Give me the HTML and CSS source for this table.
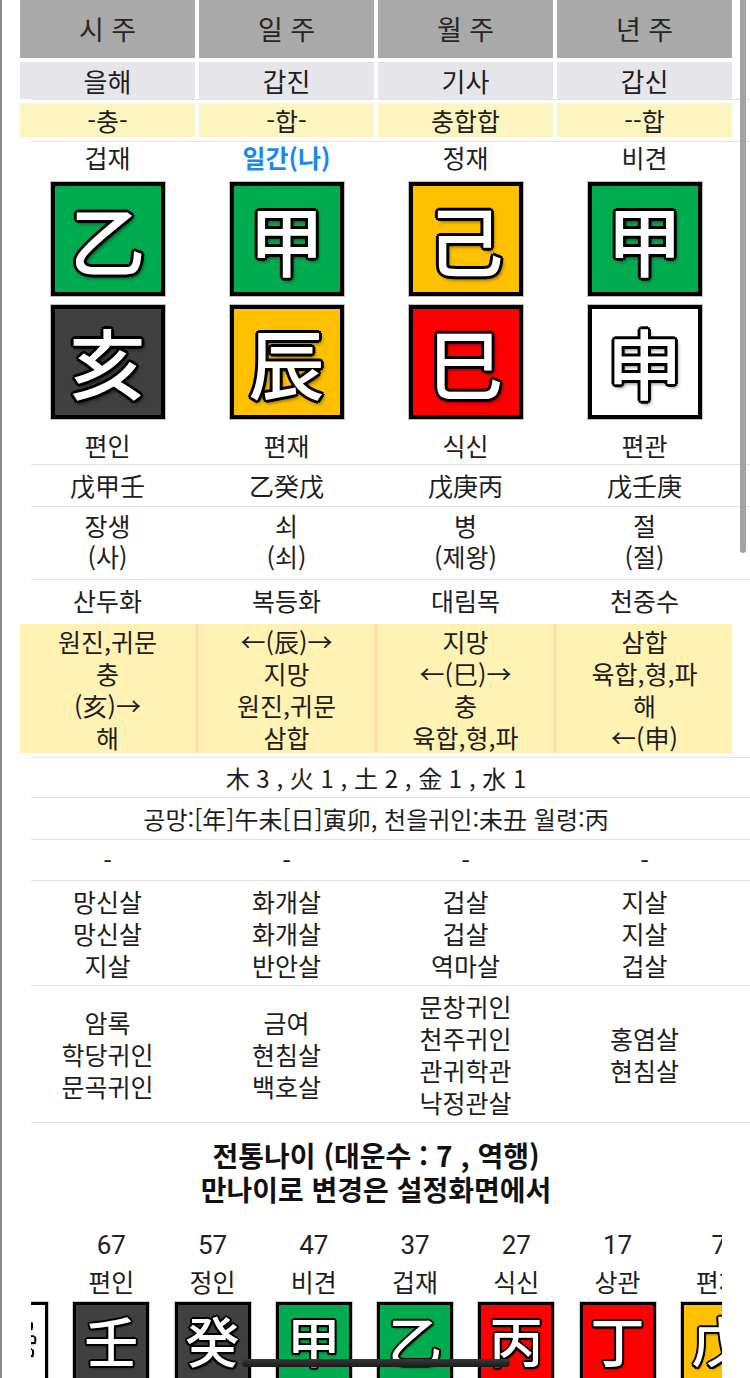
FILE: index.html
```html
<!DOCTYPE html>
<html lang="ko">
<head>
<meta charset="utf-8">
<title>사주</title>
<link rel="stylesheet" href="styles.css">
</head>
<body>
<div class="page">
  <div class="cols head">
    <div>시 주</div><div>일 주</div><div>월 주</div><div>년 주</div>
  </div>
  <div class="cols names">
    <div>을해</div><div>갑진</div><div>기사</div><div>갑신</div>
  </div>
  <div class="sep"></div>
  <div class="cols rel">
    <div>-충-</div><div>-합-</div><div>충합합</div><div>--합</div>
  </div>
  <div class="sep sep-rel"></div>

  <div class="cols pillars">
    <div class="pillar">
      <div class="lbl">겁재</div>
      <div class="gz wood">乙</div>
      <div class="gz water">亥</div>
      <div class="lbl">편인</div>
    </div>
    <div class="pillar">
      <div class="lbl me">일간(나)</div>
      <div class="gz wood">甲</div>
      <div class="gz earth">辰</div>
      <div class="lbl">편재</div>
    </div>
    <div class="pillar">
      <div class="lbl">정재</div>
      <div class="gz earth">己</div>
      <div class="gz fire">巳</div>
      <div class="lbl">식신</div>
    </div>
    <div class="pillar">
      <div class="lbl">비견</div>
      <div class="gz wood">甲</div>
      <div class="gz metal">申</div>
      <div class="lbl">편관</div>
    </div>
  </div>
  <div class="sep"></div>

  <div class="cols jj">
    <div>戊甲壬</div><div>乙癸戊</div><div>戊庚丙</div><div>戊壬庚</div>
  </div>
  <div class="sep"></div>

  <div class="cols ws">
    <div>장생<br>(사)</div><div>쇠<br>(쇠)</div><div>병<br>(제왕)</div><div>절<br>(절)</div>
  </div>
  <div class="sep"></div>

  <div class="cols ny">
    <div>산두화</div><div>복등화</div><div>대림목</div><div>천중수</div>
  </div>

  <div class="cols yb">
    <div>원진,귀문<br>충<br>(亥)→<br>해</div>
    <div>←(辰)→<br>지망<br>원진,귀문<br>삼합</div>
    <div>지망<br>←(巳)→<br>충<br>육합,형,파</div>
    <div>삼합<br>육합,형,파<br>해<br>←(申)</div>
  </div>
  <div class="sep"></div>

  <div class="full oh">木 3 , 火 1 , 土 2 , 金 1 , 水 1</div>
  <div class="sep"></div>
  <div class="full gm">공망:[年]午未[日]寅卯, 천을귀인:未丑 월령:丙</div>
  <div class="sep"></div>
  <div class="cols dash">
    <div>-</div><div>-</div><div>-</div><div>-</div>
  </div>
  <div class="sep"></div>
  <div class="cols sal">
    <div>망신살<br>망신살<br>지살</div>
    <div>화개살<br>화개살<br>반안살</div>
    <div>겁살<br>겁살<br>역마살</div>
    <div>지살<br>지살<br>겁살</div>
  </div>
  <div class="sep"></div>
  <div class="cols gi">
    <div>암록<br>학당귀인<br>문곡귀인</div>
    <div>금여<br>현침살<br>백호살</div>
    <div>문창귀인<br>천주귀인<br>관귀학관<br>낙정관살</div>
    <div>홍염살<br>현침살</div>
  </div>
  <div class="sep"></div>

  <div class="title">전통나이 (대운수 : 7 , 역행)<br>만나이로 변경은 설정화면에서</div>

  <div class="dw">
    <div class="dw-track">
      <div class="dw-item"><div class="age">77</div><div class="ss">편재</div><div class="dgz metal">辛</div></div>
      <div class="dw-item"><div class="age">67</div><div class="ss">편인</div><div class="dgz water">壬</div></div>
      <div class="dw-item"><div class="age">57</div><div class="ss">정인</div><div class="dgz water">癸</div></div>
      <div class="dw-item"><div class="age">47</div><div class="ss">비견</div><div class="dgz wood">甲</div></div>
      <div class="dw-item"><div class="age">37</div><div class="ss">겁재</div><div class="dgz wood">乙</div></div>
      <div class="dw-item"><div class="age">27</div><div class="ss">식신</div><div class="dgz fire">丙</div></div>
      <div class="dw-item"><div class="age">17</div><div class="ss">상관</div><div class="dgz fire">丁</div></div>
      <div class="dw-item"><div class="age">7</div><div class="ss">편재</div><div class="dgz earth">戊</div></div>
    </div>
  </div>

  <div class="scrollbar"></div>
  <div class="home"></div>
</div>
</body>
</html>
```

FILE: styles.css
```css
html, body {
  margin: 0;
  padding: 0;
  background: #fff;
}
body {
  width: 750px;
  height: 1378px;
  overflow: hidden;
  font-family: "Noto Sans CJK KR", "Noto Sans", sans-serif;
  color: #1e1e1e;
}
.page {
  position: relative;
  width: 748px;
  height: 1378px;
  border-left: 2px solid #8a8a8a;
  overflow: hidden;
}
.cols {
  display: grid;
  grid-template-columns: repeat(4, 1fr);
  column-gap: 4px;
  width: 712px;
  margin-left: 18px;
  text-align: center;
}
.sep {
  height: 1px;
  margin-left: 29px;
  background: #e3e3e3;
}
.head > div {
  background: #a9a9a9;
  height: 58px;
  line-height: 58px;
  font-size: 27px;
  color: #262626;
}
.names {
  margin-top: 4px;
}
.names > div {
  background: #e5e5ea;
  height: 37px;
  line-height: 37px;
  font-size: 26px;
}
.rel {
  margin-top: 3px;
}
.rel > div {
  background: #fdf5c0;
  height: 34px;
  line-height: 34px;
  font-size: 25px;
}
.sep-rel {
  margin-top: 4px;
}
.pillars {
  padding-bottom: 4px;
}
.pillar {
  display: flex;
  flex-direction: column;
  align-items: center;
}
.lbl {
  font-size: 25px;
  line-height: 30px;
}
.lbl.me {
  color: #1a88f2;
  font-weight: 700;
}
.lbl:last-child {
  margin-top: 11px;
}
.gz {
  box-sizing: border-box;
  width: 114px;
  height: 114px;
  margin-top: 10px;
  border: 4px solid #000;
  box-shadow: 0 0 0 1px rgba(0, 0, 0, 0.25);
  font-family: "Noto Sans CJK SC", "Noto Sans CJK KR", sans-serif;
  font-weight: 500;
  font-size: 76px;
  line-height: 104px;
  color: #fff;
  text-align: center;
  text-shadow:
    2px 2px 0 #000, -2px 2px 0 #000, 2px -2px 0 #000, -2px -2px 0 #000,
    0 3px 0 #000, 0 -3px 0 #000, 3px 0 0 #000, -3px 0 0 #000,
    2px 3px 4px rgba(0, 0, 0, 0.7);
}
.gz + .gz {
  margin-top: 9px;
}
.wood { background: #00ac4f; }
.fire { background: #ff0000; }
.earth { background: #ffc000; }
.metal { background: #ffffff; }
.water { background: #404040; }

.jj > div {
  font-size: 25px;
  line-height: 41px;
}
.ws {
  padding: 3px 0 7px;
}
.ws > div {
  font-size: 25px;
  line-height: 31px;
}
.ny > div {
  font-size: 25px;
  line-height: 40px;
}
.yb {
  margin-top: 4px;
  margin-bottom: 4px;
  background: #ffe0a6;
}
.yb > div {
  background: #fff2b2;
  padding-top: 1px;
  font-size: 25px;
  line-height: 32px;
}
.full {
  text-align: center;
  font-size: 24px;
}
.oh {
  line-height: 39px;
}
.gm {
  line-height: 41px;
}
.dash > div {
  font-size: 25px;
  line-height: 40px;
}
.sal {
  padding: 4px 0;
}
.sal > div {
  font-size: 25px;
  line-height: 32px;
}
.gi {
  height: 136px;
  align-items: center;
}
.gi > div {
  font-size: 25px;
  line-height: 32px;
}
.title {
  padding-top: 15px;
  text-align: center;
  font-size: 28px;
  font-weight: 700;
  line-height: 34px;
  color: #111;
}
.dw {
  margin-top: 21px;
  margin-left: 29px;
  width: 691px;
  overflow: hidden;
}
.dw-track {
  display: flex;
  margin-left: -71.6px;
}
.dw-item {
  flex: none;
  width: 101.25px;
  display: flex;
  flex-direction: column;
  align-items: center;
}
.age {
  font-family: Roboto, "Noto Sans CJK KR", sans-serif;
  font-size: 26px;
  line-height: 36px;
  color: #222;
}
.ss {
  font-size: 25px;
  line-height: 36px;
}
.dgz {
  box-sizing: border-box;
  width: 76px;
  height: 80px;
  margin-top: 3px;
  border: 3px solid #000;
  box-shadow: 0 0 0 1px rgba(0, 0, 0, 0.2);
  font-family: "Noto Sans CJK SC", "Noto Sans CJK KR", sans-serif;
  font-weight: 500;
  font-size: 54px;
  line-height: 70px;
  color: #fff;
  text-align: center;
  text-shadow:
    1.5px 1.5px 0 #000, -1.5px 1.5px 0 #000, 1.5px -1.5px 0 #000, -1.5px -1.5px 0 #000,
    0 2px 0 #000, 0 -2px 0 #000, 2px 0 0 #000, -2px 0 0 #000,
    1px 2px 3px rgba(0, 0, 0, 0.7);
}
.scrollbar {
  position: absolute;
  left: 738px;
  top: -4px;
  width: 6px;
  height: 557px;
  border-radius: 3px;
  background: #a2a2a2;
}
.home {
  position: absolute;
  left: 240px;
  top: 1359px;
  width: 268px;
  height: 8px;
  border-radius: 4px;
  background: linear-gradient(#3a3a3a, #1a1a1a);
}
```
